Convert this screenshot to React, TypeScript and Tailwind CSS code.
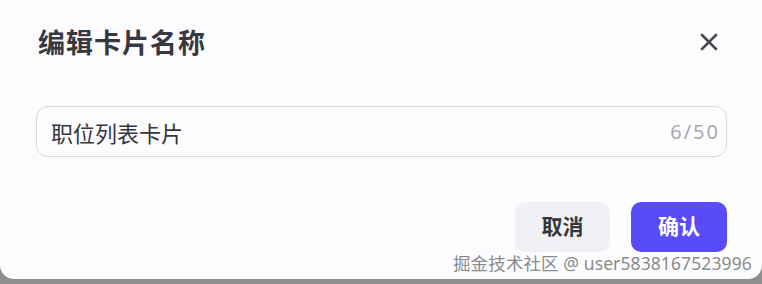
import * as React from "react";

const font = '"Noto Sans", "Noto Sans CJK SC", sans-serif';

export default function App() {
  return (
    <div className="relative h-[284px] w-[762px] overflow-hidden bg-[#8e8e8e]" style={{ fontFamily: font }}>
      <div className="flex h-[279px] w-full flex-col rounded-b-[14px] bg-[#fcfcff] pl-[36px] pr-[35px]">
        {/* header */}
        <div className="flex h-[84px] items-center justify-between pl-[2px]">
          <h2 className="text-[27px] font-bold leading-none tracking-[1px] text-[#383840]">编辑卡片名称</h2>
          <button className="mr-[6px] flex h-[24px] w-[24px] items-center justify-center text-[#4a4a52]">
            <svg width="20" height="20" viewBox="0 0 20 20" fill="none" stroke="currentColor" strokeWidth="2.6" strokeLinecap="round">
              <path d="M3 3L17 17M17 3L3 17" />
            </svg>
          </button>
        </div>

        {/* input */}
        <div className="mt-[22px] flex h-[51px] items-center rounded-[12px] border border-[#d9d9de] bg-[#fdfdff] pl-[14px] pr-[6px]">
          <input
            type="text"
            defaultValue="职位列表卡片"
            className="h-full flex-1 bg-transparent text-[22px] text-[#36363c] outline-none"
          />
          <span className="text-[20px] tracking-[2px] text-[#a9a9ae]">6/50</span>
        </div>

        {/* footer */}
        <div className="mt-[45px] flex justify-end gap-[21px]">
          <button className="h-[50px] w-[95px] rounded-[10px] bg-[#f0f1f5] text-[21px] font-bold text-[#36363c]">
            取消
          </button>
          <button className="h-[50px] w-[96px] rounded-[10px] bg-[#574cf7] text-[21px] font-bold text-white">
            确认
          </button>
        </div>
      </div>

      {/* watermark */}
      <div
        className="absolute left-[453px] top-[252px] whitespace-nowrap text-[17.5px] leading-[22px] tracking-[0.1px] text-[#8a8a8a]"
        style={{ textShadow: "1px 1px 0 #fff, -1px 0 0 #fff, 0 -1px 0 #fff" }}
      >
        掘金技术社区 @ user5838167523996
      </div>
    </div>
  );
}
